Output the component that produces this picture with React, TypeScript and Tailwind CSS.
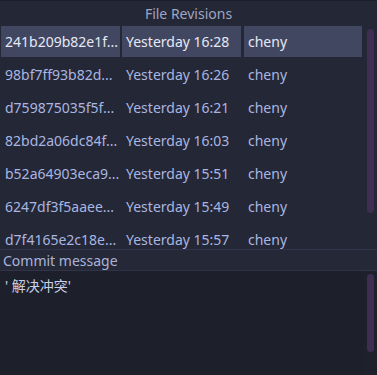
const revisions = [
  { hash: "241b209b82e1f...", date: "Yesterday 16:28", author: "cheny" },
  { hash: "98bf7ff93b82d...", date: "Yesterday 16:26", author: "cheny" },
  { hash: "d759875035f5f...", date: "Yesterday 16:21", author: "cheny" },
  { hash: "82bd2a06dc84f...", date: "Yesterday 16:03", author: "cheny" },
  { hash: "b52a64903eca9...", date: "Yesterday 15:51", author: "cheny" },
  { hash: "6247df3f5aaee...", date: "Yesterday 15:49", author: "cheny" },
  { hash: "d7f4165e2c18e...", date: "Yesterday 15:57", author: "cheny" },
];

function RevisionRow({ rev, selected }: { rev: (typeof revisions)[number]; selected: boolean }) {
  const cell = selected
    ? "bg-[#414760] text-[#e6e9f5]"
    : "text-[#a9b6e2]";
  return (
    <div className="flex h-[33px] shrink-0 items-stretch py-px">
      <div className={`ml-px flex w-[119px] items-center overflow-hidden whitespace-nowrap pl-1 ${cell}`}>
        {rev.hash}
      </div>
      <div className={`ml-[2px] flex w-[119px] items-center whitespace-nowrap pl-1 ${cell}`}>
        {rev.date}
      </div>
      <div className={`ml-[3px] flex w-[118px] items-center whitespace-nowrap pl-1 ${cell}`}>
        {rev.author}
      </div>
    </div>
  );
}

export default function App() {
  return (
    <div
      className="flex h-[375px] w-[377px] flex-col overflow-hidden bg-[#242735] text-[14px]"
      style={{ fontFamily: '"Noto Sans", "Noto Sans CJK SC", sans-serif' }}
    >
      <div className="h-px shrink-0 bg-[#1b1d28]" />
      <div className="flex h-[24px] shrink-0 items-center justify-center text-[#9ea6c4]">
        File Revisions
      </div>

      <div className="flex h-[224px] shrink-0">
        <div className="flex flex-1 flex-col overflow-hidden">
          {revisions.map((rev, i) => (
            <RevisionRow key={rev.hash} rev={rev} selected={i === 0} />
          ))}
        </div>
        <div className="flex w-[14px] shrink-0 justify-center pt-[4px]">
          <div className="h-[184px] w-[7px] rounded-full bg-[#3e2e52]" />
        </div>
      </div>

      <div className="flex h-[22px] shrink-0 items-center border-y border-[#30334a] bg-[#252837] pl-[3px] text-[#aab4da]">
        Commit message
      </div>

      <div className="flex flex-1 bg-[#1d1f2b]">
        <div className="flex-1 pl-[5px] pt-[4px] text-[#c9cfe6]">' 解决冲突'</div>
        <div className="flex w-[14px] shrink-0 justify-center bg-[#1e202c] pt-[3px]">
          <div className="h-[78px] w-[7px] rounded-full bg-[#3e2e52]" />
        </div>
      </div>
    </div>
  );
}
